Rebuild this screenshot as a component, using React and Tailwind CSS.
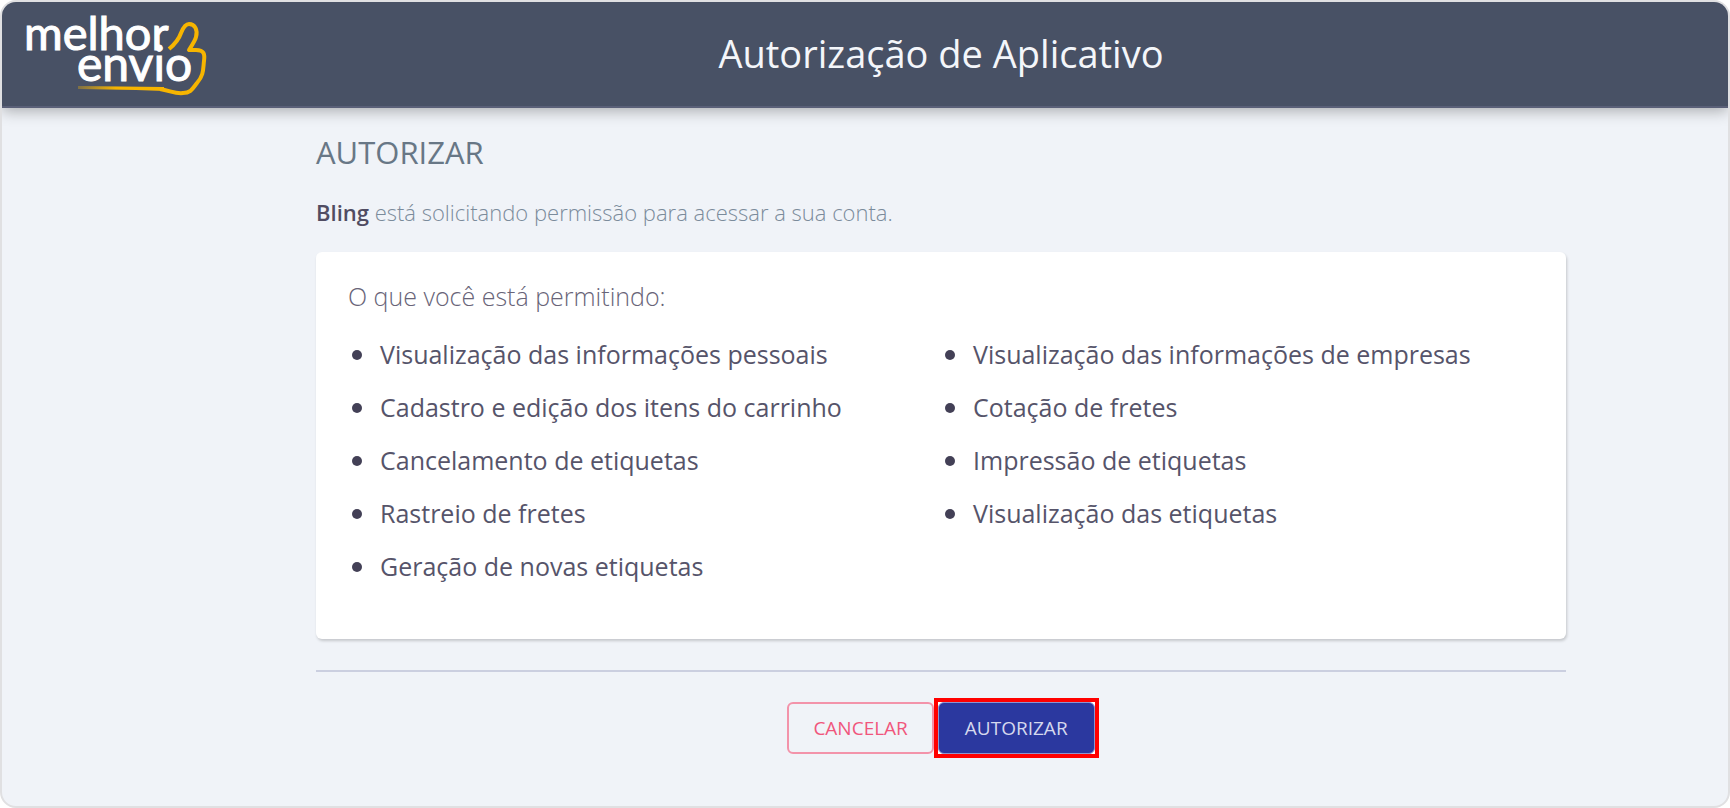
import React from 'react';

const permissionColumns = [
  [
    "Visualização das informações pessoais",
    "Cadastro e edição dos itens do carrinho",
    "Cancelamento de etiquetas",
    "Rastreio de fretes",
    "Geração de novas etiquetas"
  ],
  [
    "Visualização das informações de empresas",
    "Cotação de fretes",
    "Impressão de etiquetas",
    "Visualização das etiquetas"
  ]
];

const Logo = () => (
  <a href="#" className="block w-fit">
    <svg
      className="w-[184px] h-[88px] overflow-visible"
      viewBox="0 0 184 88"
      role="img"
      aria-label="Melhor Envio"
    >
      <defs>
        <linearGradient id="swoosh" gradientUnits="userSpaceOnUse" x1="52" y1="0" x2="90" y2="0">
          <stop offset="0" stopColor="#f7b500" stopOpacity="0.3" />
          <stop offset="1" stopColor="#f7b500" />
        </linearGradient>
      </defs>
      <g fill="#ffffff" stroke="#ffffff" strokeWidth="1" fontFamily="Lato, sans-serif">
        <text x="-2" y="40" fontSize="47">melhor</text>
        <text x="51" y="71" fontSize="48">envio</text>
      </g>
      <path d="M52 76 L138 77 V81 L110 80 L52 79 Z" fill="url(#swoosh)" />
      <path
        d="M143 39 C149 34 153 29 155 23 C157 18 159 14 163 14 C169 14 172 20 170 27 C169 31 166 35 163 40 H170 C178 40 179 44 178 51 C177 59 178 65 171 73 C167 78 165 83 157 83 C150 84 145 81 134 79"
        fill="none"
        stroke="#f7b500"
        strokeWidth="4"
        strokeLinejoin="round"
      />
    </svg>
  </a>
);

const Header = () => (
  <header className="relative z-10 h-[106px] grid grid-cols-[184px_1fr] items-center pl-6 pr-14 border-b-2 border-[#5a6078] bg-[#485165] shadow-[0_3px_14px_rgba(0,0,0,0.3)]">
    <Logo />
    <h1 className="pb-[3px] text-center text-[38px] leading-[52px] text-[#f4f6fa]">Autorização de Aplicativo</h1>
  </header>
);

const Permissions = () => (
  <section className="mt-6 pt-[26px] pb-[46px] px-8 rounded-md bg-white shadow-[1px_2px_3px_rgba(0,0,0,0.18)]">
    <h3 className="text-[25px] leading-9 font-light text-[#686478]">O que você está permitindo:</h3>
    <div className="mt-[14px] grid grid-cols-2">
      {permissionColumns.map((items, index) => (
        <ul key={index}>
          {items.map((item) => (
            <li key={item} className="flex items-center gap-[18px] pl-1 h-[53px] text-[25px]">
              <span className="size-[10px] rounded-full bg-[#434056]" />
              {item}
            </li>
          ))}
        </ul>
      ))}
    </div>
  </section>
);

const App = () => {
  return (
    <div className="min-h-screen flex flex-col overflow-hidden rounded-2xl border-2 border-[#e0e0e2] bg-[#f0f3f8] font-['Open_Sans',sans-serif] text-[#56546a]">
      <Header />
      <div className="pl-[152px]">
        <main className="w-full max-w-[1250px] mx-auto pt-6 pb-12">
          <h2 className="text-[31px] leading-10 text-[#687786]">AUTORIZAR</h2>
          <p className="mt-6 text-[22px] leading-8 font-light text-[#7b8b9b]">
            <strong className="font-semibold text-[#504c62]">Bling</strong> está solicitando permissão para acessar a sua conta.
          </p>
          <Permissions />
          <hr className="mt-[31px] border-t-2 border-[#cbcfe0]" />
          <div className="mt-[26px] pl-1 flex items-center justify-center">
            <button type="button" className="h-[52px] px-6 rounded-md border-2 border-[#f393aa] text-[19px] text-[#f0567c]">
              CANCELAR
            </button>
            <div className="border-4 border-[#ff0000] bg-white">
              <button type="button" className="block h-[52px] px-[26px] rounded-md border border-[#8c95d0] bg-[#2b389f] text-[19px] text-[#d5d8ee]">
                AUTORIZAR
              </button>
            </div>
          </div>
        </main>
      </div>
    </div>
  );
};

export default App;
